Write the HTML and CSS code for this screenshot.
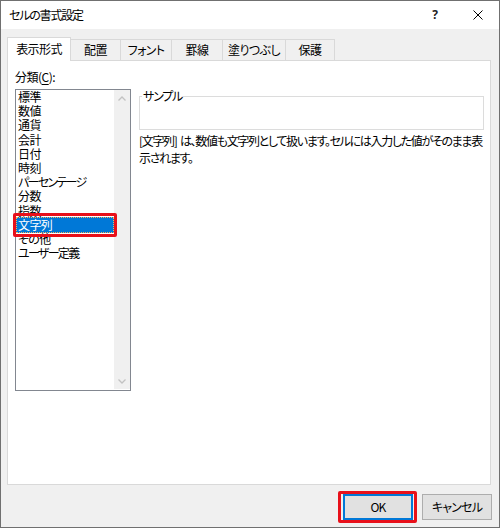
FILE: index.html
```html
<!DOCTYPE html>
<html lang="ja">
<head>
<meta charset="utf-8">
<title>セルの書式設定</title>
<link rel="stylesheet" href="styles.css">
</head>
<body>
<div class="window">
  <div class="titlebar">
    <span class="title">セルの書式設定</span>
    <span class="help">?</span>
    <span class="close"><svg width="10" height="10" viewBox="0 0 10 10"><path d="M0.5 0.5 L9.5 9.5 M9.5 0.5 L0.5 9.5" stroke="#000" stroke-width="1" fill="none"/></svg></span>
  </div>
  <div class="body">
    <div class="tabs">
      <div class="tab tab-active tab-w64">表示形式</div>
      <div class="tab tab-w51">配置</div>
      <div class="tab tab-w52">フォント</div>
      <div class="tab tab-w52">罫線</div>
      <div class="tab tab-w64">塗りつぶし</div>
      <div class="tab tab-w50">保護</div>
    </div>
    <div class="panel">
      <div class="left">
        <div class="label">分類(<u>C</u>):</div>
        <div class="listbox">
          <ul class="items">
            <li class="item">標準</li>
            <li class="item">数値</li>
            <li class="item">通貨</li>
            <li class="item">会計</li>
            <li class="item">日付</li>
            <li class="item">時刻</li>
            <li class="item item-kana">パーセンテージ</li>
            <li class="item">分数</li>
            <li class="item">指数</li>
            <li class="item item-selected">文字列<span class="mark mark-item"></span></li>
            <li class="item">その他</li>
            <li class="item item-kana">ユーザー定義</li>
          </ul>
          <div class="scrollbar">
            <span class="arrow"><svg width="8" height="5" viewBox="0 0 8 5"><path d="M0.5 4.5 L4 1 L7.5 4.5" stroke="#c2c2c2" stroke-width="1.3" fill="none"/></svg></span>
            <span class="arrow"><svg width="8" height="5" viewBox="0 0 8 5"><path d="M0.5 0.5 L4 4 L7.5 0.5" stroke="#c2c2c2" stroke-width="1.3" fill="none"/></svg></span>
          </div>
        </div>
      </div>
      <div class="right">
        <fieldset class="sample">
          <legend class="sample-legend">サンプル</legend>
          <div class="sample-body"></div>
        </fieldset>
        <p class="desc">[文字列] は、数値も文字列として扱います。セルには入力した値がそのまま表<br>示されます。</p>
      </div>
    </div>
    <div class="buttons">
      <button class="btn btn-default">OK<span class="mark mark-btn"></span></button>
      <button class="btn">キャンセル</button>
    </div>
  </div>
</div>
</body>
</html>
```
FILE: styles.css
```css
* { box-sizing: border-box; }
html, body { margin: 0; padding: 0; }
body {
  font-family: "Noto Sans CJK JP", "Noto Sans", sans-serif;
  font-size: 12px;
  font-feature-settings: "palt" 1;
  letter-spacing: -1px;
  color: #000;
  background: #fff;
}
.window {
  width: 500px;
  height: 528px;
  border: 1px solid #707070;
  background: #f0f0f0;
  display: flex;
  flex-direction: column;
}
.titlebar {
  height: 28px;
  background: #fff;
  display: flex;
  align-items: center;
  padding-left: 8px;
}
.title { flex: 1; line-height: 16px; letter-spacing: -1.2px; }
.help {
  width: 20px;
  margin-right: 12px;
  text-align: center;
  font-family: "Noto Sans", sans-serif;
  font-weight: bold;
  font-size: 12px;
  line-height: 16px;
  letter-spacing: 0;
  color: #222;
}
.close {
  width: 42px;
  display: flex;
  justify-content: center;
  align-items: center;
}
.body {
  flex: 1;
  padding: 8px 8px 0 6px;
  display: flex;
  flex-direction: column;
}
.tabs {
  display: flex;
  align-items: flex-end;
  height: 23px;
}
.tab {
  flex: none;
  height: 21px;
  border: 1px solid #d9d9d9;
  border-bottom: 0;
  margin-left: -1px;
  background: #f0f0f0;
  display: flex;
  align-items: center;
  justify-content: center;
  line-height: 16px;
  letter-spacing: -0.6px;
}
.tab:first-child { margin-left: 0; }
.tab-active {
  height: 24px;
  margin-bottom: -1px;
  background: #fff;
  position: relative;
  z-index: 1;
  padding-bottom: 2px;
}
.tab-w64 { width: 64px; }
.tab-w52 { width: 52px; }
.tab-w51 { width: 51px; }
.tab-w50 { width: 50px; }
.panel {
  height: 425px;
  border: 1px solid #d9d9d9;
  background: #fff;
  padding: 8px 6px 0 7px;
  display: flex;
  gap: 8px;
}
.left { width: 116px; flex: none; }
.label { line-height: 16px; margin-bottom: 4px; letter-spacing: -0.5px; }
.label u { text-underline-offset: 2px; }
.listbox {
  height: 302px;
  border: 1px solid #828790;
  display: flex;
}
.items {
  list-style: none;
  margin: 0;
  padding: 0;
  flex: 1;
}
.item {
  line-height: 14.2px;
  height: 14.2px;
  padding-left: 2px;
  white-space: nowrap;
  letter-spacing: -0.6px;
}
.item-kana { letter-spacing: -1.7px; }
.item-selected {
  position: relative;
  background: #0078d7;
  color: #fff;
  height: 16.2px;
  margin: -1px 0;
  padding-top: 1px;
  outline: 1px dotted #f5b25a;
  outline-offset: -1px;
}
.mark {
  position: absolute;
  border: 3px solid #e8101a;
  border-radius: 2px;
  pointer-events: none;
}
.mark-item { top: -4px; bottom: -4px; left: -3px; right: -3px; }
.scrollbar {
  width: 16px;
  background: #f0f0f0;
  display: flex;
  flex-direction: column;
  justify-content: space-between;
  margin-bottom: 1px;
}
.arrow {
  height: 16px;
  display: flex;
  align-items: center;
  justify-content: center;
}
.right { flex: 1; min-width: 0; }
.sample {
  margin: 19px 0 0 0;
  padding: 0 0 0 2px;
  border: 1px solid #dcdcdc;
}
.sample-legend {
  padding: 0 1px;
  line-height: 16px;
  letter-spacing: -1.2px;
}
.sample-body { height: 25px; }
.desc {
  margin: 3px 0 0 0;
  line-height: 16.5px;
  white-space: nowrap;
  letter-spacing: -1.32px;
  word-spacing: 2px;
}
.buttons {
  display: flex;
  justify-content: flex-end;
  gap: 9px;
  padding: 9px 0 0 0;
  margin-right: -1px;
}
.btn {
  position: relative;
  width: 70px;
  height: 26px;
  background: #e1e1e1;
  border: 1px solid #adadad;
  font-family: inherit;
  font-size: 12px;
  font-feature-settings: "palt" 1;
  letter-spacing: -0.8px;
  line-height: 16px;
  padding: 0;
  color: #000;
}
.btn-default {
  border-color: #0078d7;
  box-shadow: inset 0 0 0 1px #0078d7;
}
.mark-btn { top: -4px; bottom: -4px; left: -6px; right: -5px; }
```
